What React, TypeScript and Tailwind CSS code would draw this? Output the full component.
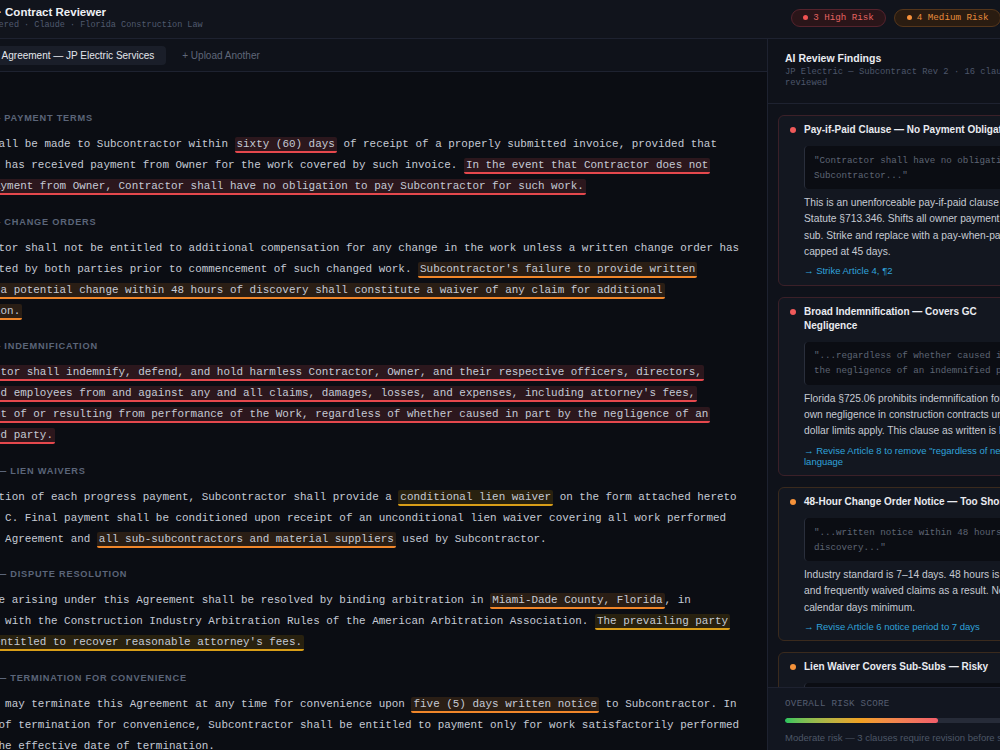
import React from "react";

type Level = "high" | "med" | "low";

function H({ l, children }: { l: Level; children: React.ReactNode }) {
  const cls =
    l === "high"
      ? "bg-[#2c171d] border-[#e5484d]"
      : l === "med"
      ? "bg-[#2a1e15] border-[#f0862a]"
      : "bg-[#28210f] border-[#d99e18]";
  return (
    <span className={`${cls} border-b-2 px-[2px] py-[1px] rounded-[2px] box-decoration-clone`}>
      {children}
    </span>
  );
}

const sections: { title: string; body: React.ReactNode }[] = [
  {
    title: "Article 4 — Payment Terms",
    body: (
      <>
        Payment shall be made to Subcontractor within <H l="high">sixty (60) days</H> of receipt of a
        properly submitted invoice, provided that Contractor has received payment from Owner for the work
        covered by such invoice.{" "}
        <H l="high">
          In the event that Contractor does not receive payment from Owner, Contractor shall have no
          obligation to pay Subcontractor for such work.
        </H>
      </>
    ),
  },
  {
    title: "Article 6 — Change Orders",
    body: (
      <>
        Subcontractor shall not be entitled to additional compensation for any change in the work unless a
        written change order has been executed by both parties prior to commencement of such changed
        work.{" "}
        <H l="med">
          Subcontractor's failure to provide written notice of a potential change within 48 hours of
          discovery shall constitute a waiver of any claim for additional compensation.
        </H>
      </>
    ),
  },
  {
    title: "Article 8 — Indemnification",
    body: (
      <H l="high">
        Subcontractor shall indemnify, defend, and hold harmless Contractor, Owner, and their respective
        officers, directors, agents, and employees from and against any and all claims, damages, losses, and
        expenses, including attorney's fees, arising out of or resulting from performance of the Work,
        regardless of whether caused in part by the negligence of an indemnified party.
      </H>
    ),
  },
  {
    title: "Article 10 — Lien Waivers",
    body: (
      <>
        As a condition of each progress payment, Subcontractor shall provide a{" "}
        <H l="low">conditional lien waiver</H> on the form attached hereto as Exhibit C. Final payment shall
        be conditioned upon receipt of an unconditional lien waiver covering all work performed under this
        Agreement and <H l="med">all sub-subcontractors and material suppliers</H> used by Subcontractor.
      </>
    ),
  },
  {
    title: "Article 12 — Dispute Resolution",
    body: (
      <>
        Any dispute arising under this Agreement shall be resolved by binding arbitration in{" "}
        <H l="med">Miami-Dade County, Florida</H>, in accordance with the Construction Industry Arbitration
        Rules of the American Arbitration Association.{" "}
        <H l="low">The prevailing party shall be entitled to recover reasonable attorney's fees.</H>
      </>
    ),
  },
  {
    title: "Article 14 — Termination for Convenience",
    body: (
      <>
        Contractor may terminate this Agreement at any time for convenience upon{" "}
        <H l="med">five (5) days written notice</H> to Subcontractor. In the event of termination for
        convenience, Subcontractor shall be entitled to payment only for work satisfactorily performed prior
        to the effective date of termination.
      </>
    ),
  },
];

type Finding = {
  level: "high" | "med";
  title: string[];
  quote: string[];
  body: string[];
  action: string[];
};

const findings: Finding[] = [
  {
    level: "high",
    title: ["Pay-if-Paid Clause — No Payment Obligation"],
    quote: ['"Contractor shall have no obligation to pay', 'Subcontractor..."'],
    body: [
      "This is an unenforceable pay-if-paid clause under",
      "Statute §713.346. Shifts all owner payment risk to the",
      "sub. Strike and replace with a pay-when-paid clause",
      "capped at 45 days.",
    ],
    action: ["→ Strike Article 4, ¶2"],
  },
  {
    level: "high",
    title: ["Broad Indemnification — Covers GC", "Negligence"],
    quote: ['"...regardless of whether caused in part by', 'the negligence of an indemnified party..."'],
    body: [
      "Florida §725.06 prohibits indemnification for a party's",
      "own negligence in construction contracts unless",
      "dollar limits apply. This clause as written is likely void.",
    ],
    action: ['→ Revise Article 8 to remove "regardless of negligence"', "language"],
  },
  {
    level: "med",
    title: ["48-Hour Change Order Notice — Too Short"],
    quote: ['"...written notice within 48 hours of', 'discovery..."'],
    body: [
      "Industry standard is 7–14 days. 48 hours is unrealistic",
      "and frequently waived claims as a result. Negotiate 7",
      "calendar days minimum.",
    ],
    action: ["→ Revise Article 6 notice period to 7 days"],
  },
  {
    level: "med",
    title: ["Lien Waiver Covers Sub-Subs — Risky"],
    quote: ['"...all sub-subcontractors and material', 'suppliers..."'],
    body: [
      "You may be liable for waivers you cannot obtain from",
      "lower-tier suppliers. Limit to your own direct work.",
    ],
    action: ["→ Revise Article 10 scope"],
  },
];

function FindingCard({ f }: { f: Finding }) {
  const border = f.level === "high" ? "border-[#3b2028]" : "border-[#3a2a1d]";
  const dot = f.level === "high" ? "bg-[#f05a5a]" : "bg-[#f5923a]";
  return (
    <div className={`shrink-0 rounded-[6px] border ${border} bg-[#131720] pt-[7px] pb-[8.5px] px-[11px] overflow-hidden`}>
      <div className="flex items-start gap-[8px]">
        <span className={`mt-[4px] w-[6px] h-[6px] rounded-full shrink-0 ${dot}`} />
        <div className="text-[10px] leading-[14px] font-bold text-[#e9ebf0] whitespace-nowrap">
          {f.title.map((t) => (
            <div key={t}>{t}</div>
          ))}
        </div>
      </div>
      <div className="pl-[14px]">
        <div className="mt-[9px] rounded-[4px] border-l border-[#2a2f3c] bg-[#0b0d13] pl-[9px] py-[6.5px] font-['Liberation_Mono',monospace] text-[9.2px] leading-[15px] text-[#5e6573] whitespace-nowrap overflow-hidden">
          {f.quote.map((q) => (
            <div key={q}>{q}</div>
          ))}
        </div>
        <div className="mt-[6px] text-[10.25px] leading-[16.3px] text-[#c6cad3] whitespace-nowrap">
          {f.body.map((b) => (
            <div key={b}>{b}</div>
          ))}
        </div>
        <div className="mt-[5px] text-[9.5px] leading-[11px] text-[#30a2da] whitespace-nowrap">
          {f.action.map((a) => (
            <div key={a}>{a}</div>
          ))}
        </div>
      </div>
    </div>
  );
}

export default function App() {
  return (
    <div className="w-[1000px] h-[750px] overflow-hidden bg-[#0b0d13] font-['Liberation_Sans',Arial,sans-serif]">
      <div className="ml-[-99px] w-[1151px] h-[750px] flex flex-col">
        {/* Header */}
        <header className="h-[39px] shrink-0 flex items-center justify-between pl-[24px] pr-[51px] pb-[3px] bg-[#11141c] border-b border-[#1e2230]">
          <div className="flex items-center gap-[15px]">
            <div className="w-[28px] h-[28px] rounded-[6px] bg-[#1d2433] flex items-center justify-center">
              <svg width="16" height="16" viewBox="0 0 24 24" fill="none" stroke="#7dd3fc" strokeWidth="2" strokeLinecap="round" strokeLinejoin="round">
                <path d="M12 3v18M5 7h14M5 7l-3 7a3 3 0 0 0 6 0zM19 7l-3 7a3 3 0 0 0 6 0z" />
              </svg>
            </div>
            <div>
              <div className="text-[11.5px] leading-[14px] font-bold text-[#eef0f4] whitespace-nowrap">
                Field · Contract Reviewer
              </div>
              <div className="mt-[1px] font-['Liberation_Mono',monospace] text-[8.5px] leading-[11px] text-[#505a6e] whitespace-nowrap">
                AI-Powered · Claude · Florida Construction Law
              </div>
            </div>
          </div>
          <div className="flex items-center gap-[8px]">
            <span className="flex items-center gap-[5px] h-[18px] px-[11.5px] rounded-full border border-[#55232d] bg-[#2a1519] font-['Liberation_Mono',monospace] text-[9.2px] text-[#e46461] whitespace-nowrap">
              <span className="w-[5px] h-[5px] rounded-full bg-[#f05252]" />3 High Risk
            </span>
            <span className="flex items-center gap-[5px] h-[18px] px-[11.5px] rounded-full border border-[#55361b] bg-[#2a1c11] font-['Liberation_Mono',monospace] text-[9.2px] text-[#e88c3c] whitespace-nowrap">
              <span className="w-[5px] h-[5px] rounded-full bg-[#f7913a]" />4 Medium Risk
            </span>
          </div>
        </header>

        <div className="flex flex-1 min-h-0">
          {/* Document column */}
          <div className="flex-1 min-w-0 flex flex-col">
            <div className="h-[33px] shrink-0 flex items-center gap-[16px] pl-[33px] bg-[#0f121a] border-b border-[#1e2230]">
              <span className="h-[19px] flex items-center px-[12px] rounded-[4px] bg-[#1a1e29] text-[10px] text-[#e3e6ec] whitespace-nowrap">
                Subcontract Agreement — JP Electric Services
              </span>
              <span className="text-[10px] text-[#5f6779] whitespace-nowrap">+ Upload Another</span>
            </div>
            <div className="flex-1 min-h-0 overflow-hidden pl-[32px] pt-[39px]">
              {sections.map((s) => (
                <section key={s.title} className="mb-[17.6px]">
                  <h3 className="mb-[9px] text-[9.2px] leading-[14px] font-bold uppercase tracking-[0.8px] text-[#5b6579] whitespace-nowrap">
                    {s.title}
                  </h3>
                  <p className="w-[calc(123ch+1px)] font-['Liberation_Mono',monospace] text-[10.93px] leading-[21px] text-[#c5cad5]">
                    {s.body}
                  </p>
                </section>
              ))}
            </div>
          </div>

          {/* Findings panel */}
          <aside className="w-[285px] shrink-0 flex flex-col bg-[#0f121a] border-l border-[#1e2230]">
            <div className="shrink-0 pt-[12px] pb-[14.5px] px-[17px] border-b border-[#1e2230]">
              <div className="text-[10.5px] leading-[14px] font-bold text-[#e9ebf0]">AI Review Findings</div>
              <div className="mt-[1.5px] font-['Liberation_Mono',monospace] text-[8.8px] leading-[11px] text-[#4d566a]">
                JP Electric — Subcontract Rev 2 · 16 clauses reviewed
              </div>
            </div>
            <div className="flex-1 min-h-0 overflow-hidden px-[10px] pt-[11px] flex flex-col gap-[11px]">
              {findings.map((f) => (
                <FindingCard key={f.title[0]} f={f} />
              ))}
            </div>
            <div className="shrink-0 border-t border-[#1e2230] bg-[#121620] pt-[10px] pb-[6px] px-[17px]">
              <div className="font-['Liberation_Mono',monospace] text-[9.2px] leading-[11px] tracking-[0.3px] uppercase text-[#565e70]">
                Overall Risk Score
              </div>
              <div className="mt-[8.5px] h-[5px] rounded-full bg-[#262b38] overflow-hidden">
                <div className="h-full w-[61%] rounded-full bg-linear-to-r from-[#22c55e] via-[#f2a022] to-[#f25d6a]" />
              </div>
              <div className="mt-[9.5px] text-[9.5px] leading-[12px] text-[#4d5667] whitespace-nowrap">
                Moderate risk — 3 clauses require revision before signing
              </div>
            </div>
          </aside>
        </div>
      </div>
    </div>
  );
}
